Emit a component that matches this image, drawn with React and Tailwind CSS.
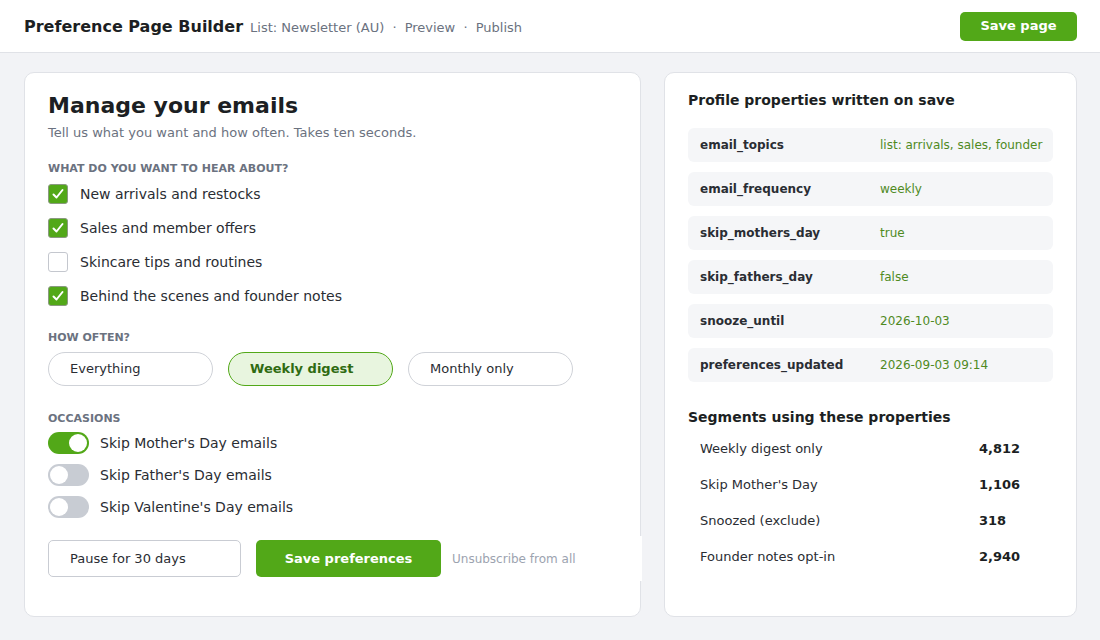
import { useState } from "react";

const topics = [
  { label: "New arrivals and restocks", on: true },
  { label: "Sales and member offers", on: true },
  { label: "Skincare tips and routines", on: false },
  { label: "Behind the scenes and founder notes", on: true },
];

const occasions = [
  { label: "Skip Mother's Day emails", on: true },
  { label: "Skip Father's Day emails", on: false },
  { label: "Skip Valentine's Day emails", on: false },
];

const props = [
  ["email_topics", "list: arrivals, sales, founder"],
  ["email_frequency", "weekly"],
  ["skip_mothers_day", "true"],
  ["skip_fathers_day", "false"],
  ["snooze_until", "2026-10-03"],
  ["preferences_updated", "2026-09-03 09:14"],
];

const segments = [
  ["Weekly digest only", "4,812"],
  ["Skip Mother's Day", "1,106"],
  ["Snoozed (exclude)", "318"],
  ["Founder notes opt-in", "2,940"],
];

function Check({ on }) {
  return (
    <span
      className={`w-5 h-5 flex-shrink-0 rounded-[3px] flex items-center justify-center border ${
        on ? "bg-[#52a818] border-[#8a9a80]" : "bg-white border-[#c4c7ce]"
      }`}
    >
      {on && (
        <svg width="14" height="14" viewBox="0 0 14 14" fill="none">
          <path d="M2.5 7.5 L5.5 10.5 L11.5 3" stroke="white" strokeWidth="2" strokeLinecap="round" strokeLinejoin="round" />
        </svg>
      )}
    </span>
  );
}

function Toggle({ on }) {
  return (
    <span
      className={`w-[41px] h-[22px] flex-shrink-0 rounded-full flex items-center px-[2px] ${
        on ? "bg-[#52a818] justify-end" : "bg-[#c8ccd3] justify-start"
      }`}
    >
      <span className="w-[18px] h-[18px] rounded-full bg-white" />
    </span>
  );
}

function Label({ children }) {
  return <div className="text-[11px] leading-[14px] font-bold text-[#6b7280] uppercase">{children}</div>;
}

export default function App() {
  const [freq, setFreq] = useState("Weekly digest");

  return (
    <div className="w-[1100px] h-[640px] overflow-hidden bg-[#f2f3f6] text-[#202327] font-['DejaVu_Sans',sans-serif] flex flex-col">
      <header className="h-[53px] flex-shrink-0 bg-white border-b border-[#e0e2e7] flex items-center justify-between pl-6 pr-[23px]">
        <div className="flex items-baseline gap-[7px] pt-[1px]">
          <h1 className="text-[16px] font-bold text-[#1c1f23]">Preference Page Builder</h1>
          <span className="text-[13px] text-[#6b7280]">
            List: Newsletter (AU) <span className="mx-[4px]">·</span> Preview <span className="mx-[4px]">·</span> Publish
          </span>
        </div>
        <button className="h-[29px] w-[117px] rounded-[5px] bg-[#52a818] text-white text-[13px] font-bold">
          Save page
        </button>
      </header>

      <main className="flex items-start gap-[23px] px-6 pt-[19px]">
        <section className="w-[617px] h-[545px] flex-shrink-0 bg-white border border-[#e0e2e7] rounded-[10px] px-[23px] pt-[19px] flex flex-col">
          <h2 className="text-[22px] font-bold text-[#1c1f23] leading-[28px]">Manage your emails</h2>
          <p className="text-[13px] leading-4 text-[#6b7280] mt-[5px]">Tell us what you want and how often. Takes ten seconds.</p>

          <div className="mt-[21px]">
            <Label>What do you want to hear about?</Label>
          </div>
          <div className="flex flex-col gap-[14px] mt-[8px]">
            {topics.map((t) => (
              <label key={t.label} className="h-5 flex items-center gap-3 text-[14px] leading-5 text-[#2a2d33]">
                <Check on={t.on} />
                {t.label}
              </label>
            ))}
          </div>

          <div className="mt-[25px]">
            <Label>How often?</Label>
          </div>
          <div className="flex gap-[15px] mt-[7px]">
            {["Everything", "Weekly digest", "Monthly only"].map((f) => (
              <button
                key={f}
                onClick={() => setFreq(f)}
                className={`w-[165px] h-[34px] rounded-full border text-left pl-[21px] text-[13px] ${
                  freq === f
                    ? "bg-[#e8f5df] border-[#52a818] text-[#2f6b12] font-bold"
                    : "bg-white border-[#cfd2d8] text-[#2a2d33]"
                }`}
              >
                {f}
              </button>
            ))}
          </div>

          <div className="mt-[26px]">
            <Label>Occasions</Label>
          </div>
          <div className="flex flex-col gap-[10px] mt-[6px]">
            {occasions.map((o) => (
              <div key={o.label} className="h-[22px] flex items-center gap-[11px] text-[14px] leading-5 text-[#2a2d33]">
                <Toggle on={o.on} />
                {o.label}
              </div>
            ))}
          </div>

          <div className="w-[594px] flex-shrink-0 bg-white flex items-center gap-[15px] mt-[18px] py-[4px]">
            <button className="w-[193px] h-[37px] rounded-[5px] border border-[#c9ccd3] bg-white text-left pl-[21px] text-[13px] text-[#2a2d33]">
              Pause for 30 days
            </button>
            <button className="w-[185px] h-[37px] rounded-[5px] bg-[#52a818] text-white text-[13px] font-bold">
              Save preferences
            </button>
            <span className="text-[12px] text-[#9ca3af] -ml-[4px]">Unsubscribe from all</span>
          </div>
        </section>

        <section className="w-[413px] h-[545px] flex-shrink-0 bg-white border border-[#e0e2e7] rounded-[10px] px-[23px] pt-[18px]">
          <h3 className="text-[14px] leading-[18px] font-bold text-[#1c1f23]">Profile properties written on save</h3>
          <div className="flex flex-col gap-[10px] mt-[19px]">
            {props.map(([k, v]) => (
              <div key={k} className="h-[34px] rounded-[6px] bg-[#f5f6f8] grid grid-cols-[180px_1fr] items-center px-3 text-[12px]">
                <span className="font-bold text-[#2a2d33]">{k}</span>
                <span className="text-[#4f8a1f] whitespace-nowrap">{v}</span>
              </div>
            ))}
          </div>

          <h3 className="text-[14px] leading-[18px] font-bold text-[#1c1f23] mt-[26px]">Segments using these properties</h3>
          <div className="flex flex-col mt-[5px]">
            {segments.map(([n, c]) => (
              <div key={n} className="h-[36px] grid grid-cols-[1fr_62px] items-center px-3 text-[13px]">
                <span className="text-[#2a2d33]">{n}</span>
                <span className="font-bold text-[#1c1f23]">{c}</span>
              </div>
            ))}
          </div>
        </section>
      </main>
    </div>
  );
}
